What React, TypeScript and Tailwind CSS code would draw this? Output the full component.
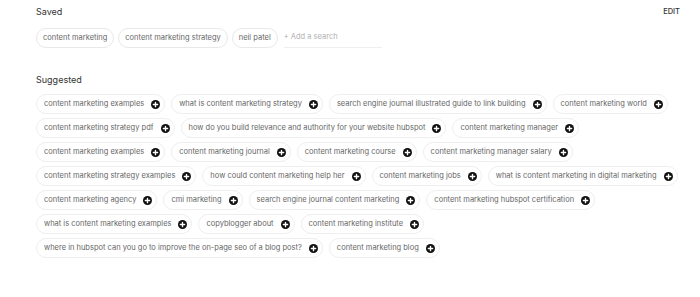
const saved = ['content marketing', 'content marketing strategy', 'neil patel'];

const suggestedRows: string[][] = [
  ['content marketing examples', 'what is content marketing strategy', 'search engine journal illustrated guide to link building', 'content marketing world'],
  ['content marketing strategy pdf', 'how do you build relevance and authority for your website hubspot', 'content marketing manager'],
  ['content marketing examples', 'content marketing journal', 'content marketing course', 'content marketing manager salary'],
  ['content marketing strategy examples', 'how could content marketing help her', 'content marketing jobs', 'what is content marketing in digital marketing'],
  ['content marketing agency', 'cmi marketing', 'search engine journal content marketing', 'content marketing hubspot certification'],
  ['what is content marketing examples', 'copyblogger about', 'content marketing institute'],
  ['where in hubspot can you go to improve the on-page seo of a blog post?', 'content marketing blog'],
];

function PlusCircle() {
  return (
    <svg width="9" height="9" viewBox="0 0 10 10" className="shrink-0">
      <circle cx="5" cy="5" r="5" fill="#111" />
      <path d="M5 2.6v4.8M2.6 5h4.8" stroke="#fff" strokeWidth="1.5" strokeLinecap="round" />
    </svg>
  );
}

function SavedChip({ label }: { label: string }) {
  return (
    <div className="flex h-[20px] items-center rounded-full border border-[#e8e8e8] px-[6px] text-[7.5px] text-[#666]">
      {label}
    </div>
  );
}

function SuggestedChip({ label }: { label: string }) {
  return (
    <div className="flex h-[20px] items-center gap-[7px] rounded-full border border-[#eeeeee] pl-[7px] pr-[4px] text-[7.5px] text-[#666]">
      <span>{label}</span>
      <PlusCircle />
    </div>
  );
}

export default function App() {
  return (
    <div className="h-[297px] w-[700px] bg-white pl-[36px] pr-[20px] pt-[5px]" style={{ fontFamily: 'Inter, "Liberation Sans", sans-serif' }}>
      <div className="flex items-center justify-between">
        <h3 className="text-[9px] text-[#333]">Saved</h3>
        <button className="text-[7.5px] font-medium text-[#333]">EDIT</button>
      </div>

      <div className="mt-[9px] flex items-center gap-[4px]">
        {saved.map((s) => (
          <SavedChip key={s} label={s} />
        ))}
        <div className="ml-[2px] flex h-[20px] w-[98px] items-center border-b border-[#eeeeee] text-[7.5px] text-[#b0b0b0]">
          + Add a search
        </div>
      </div>

      <h3 className="mt-[25px] text-[9px] text-[#333]">Suggested</h3>

      <div className="mt-[8px] flex flex-col gap-[4px]">
        {suggestedRows.map((row, i) => (
          <div key={i} className="flex gap-[6px]">
            {row.map((s, j) => (
              <SuggestedChip key={j} label={s} />
            ))}
          </div>
        ))}
      </div>
    </div>
  );
}
